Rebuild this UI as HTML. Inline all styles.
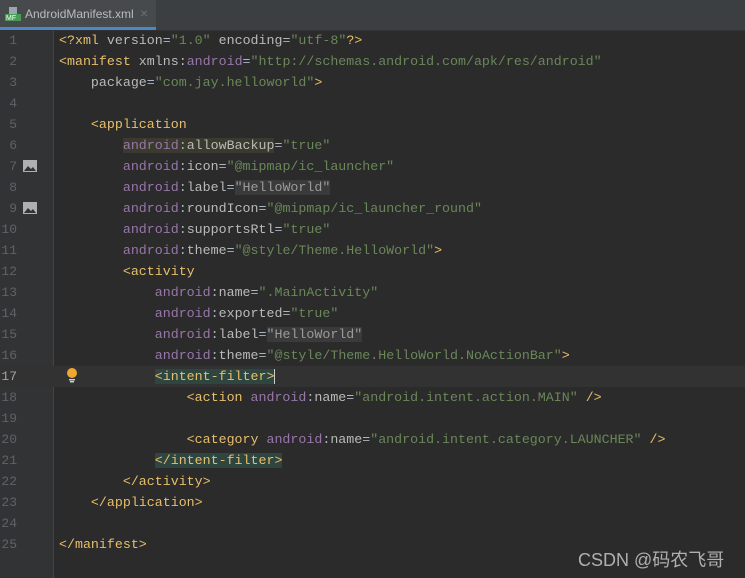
<!DOCTYPE html><html><head><style>
body{margin:0;width:745px;height:578px;background:#2b2b2b;overflow:hidden;position:relative;font-family:"Liberation Mono","DejaVu Sans Mono",monospace}
.tabbar{position:absolute;left:0;top:0;width:745px;height:30px;background:#3c3f41;border-bottom:1px solid #323232}
.tab{position:absolute;left:0;top:0;width:156px;height:27px;background:#474a4c;border-bottom:3px solid #4a88c7}
.tab span{position:absolute;left:25px;top:7px;font:12px "Liberation Sans",sans-serif;color:#bbbbbb}
.gut{position:absolute;left:0;top:31px;width:53px;height:547px;background:#313335;border-right:1px solid #444}
.l{position:absolute;left:0;height:21px;line-height:21px;font-size:13.3px;white-space:pre;width:745px}
.n{position:absolute;left:0;width:17px;text-align:right;color:#606366;font-size:13px}
.c{position:absolute;left:59px;color:#a9b7c6}
.t{color:#e8bf6a}.a{color:#9876aa}.v{color:#6a8759}.p{color:#bababa}
.hl{background:#2f4640}
</style></head><body>
<div class="tabbar"><div class="tab"><svg style="position:absolute;left:5px;top:7px" width="16" height="14"><rect x="4" y="0" width="8" height="7" fill="#9aa7b0"/><rect x="0" y="7" width="16" height="7" fill="#499c54"/><text x="1" y="13" font-size="7" fill="#fff" font-family="Liberation Sans">MF</text></svg><span>AndroidManifest.xml</span><span style="left:140px;top:5px;font-size:14px;color:#6e6e6e">×</span></div></div>
<div class="gut"></div>
<div class="l" style="top:366px;background:#323232"></div>
<div class="l" style="top:30px"><span class="n">1</span><span class="c"><span class="t">&lt;?xml </span><span class="p">version</span>=<span class="v">"1.0"</span> <span class="p">encoding</span>=<span class="v">"utf-8"</span><span class="t">?&gt;</span></span></div>
<div class="l" style="top:51px"><span class="n">2</span><span class="c"><span class="t">&lt;manifest </span><span class="p">xmlns:</span><span class="a">android</span>=<span class="v">"http://schemas.android.com/apk/res/android"</span></span></div>
<div class="l" style="top:72px"><span class="n">3</span><span class="c">    <span class="p">package</span>=<span class="v">"com.jay.helloworld"</span><span class="t">&gt;</span></span></div>
<div class="l" style="top:93px"><span class="n">4</span></div>
<div class="l" style="top:114px"><span class="n">5</span><span class="c">    <span class="t">&lt;application</span></span></div>
<div class="l" style="top:135px"><span class="n">6</span><span class="c">        <span style="background:#3b3a2e"><span class="a">android</span>:<span class="p">allowBackup</span></span>=<span class="v">"true"</span></span></div>
<div class="l" style="top:156px"><span class="n">7</span><span class="c">        <span class="a">android</span>:<span class="p">icon</span>=<span class="v">"@mipmap/ic_launcher"</span></span></div>
<div class="l" style="top:177px"><span class="n">8</span><span class="c">        <span class="a">android</span>:<span class="p">label</span>=<span class="v" style="background:#3a3a3a;color:#9a9a9a">"HelloWorld"</span></span></div>
<div class="l" style="top:198px"><span class="n">9</span><span class="c">        <span class="a">android</span>:<span class="p">roundIcon</span>=<span class="v">"@mipmap/ic_launcher_round"</span></span></div>
<div class="l" style="top:219px"><span class="n">10</span><span class="c">        <span class="a">android</span>:<span class="p">supportsRtl</span>=<span class="v">"true"</span></span></div>
<div class="l" style="top:240px"><span class="n">11</span><span class="c">        <span class="a">android</span>:<span class="p">theme</span>=<span class="v">"@style/Theme.HelloWorld"</span><span class="t">&gt;</span></span></div>
<div class="l" style="top:261px"><span class="n">12</span><span class="c">        <span class="t">&lt;activity</span></span></div>
<div class="l" style="top:282px"><span class="n">13</span><span class="c">            <span class="a">android</span>:<span class="p">name</span>=<span class="v">".MainActivity"</span></span></div>
<div class="l" style="top:303px"><span class="n">14</span><span class="c">            <span class="a">android</span>:<span class="p">exported</span>=<span class="v">"true"</span></span></div>
<div class="l" style="top:324px"><span class="n">15</span><span class="c">            <span class="a">android</span>:<span class="p">label</span>=<span class="v" style="background:#3a3a3a;color:#9a9a9a">"HelloWorld"</span></span></div>
<div class="l" style="top:345px"><span class="n">16</span><span class="c">            <span class="a">android</span>:<span class="p">theme</span>=<span class="v">"@style/Theme.HelloWorld.NoActionBar"</span><span class="t">&gt;</span></span></div>
<div class="l" style="top:366px"><span class="n" style="color:#a4a3a3">17</span><span class="c">            <span class="t hl">&lt;intent-filter&gt;</span><span style="border-left:1px solid #ccc"></span></span></div>
<div class="l" style="top:387px"><span class="n">18</span><span class="c">                <span class="t">&lt;action </span><span class="a">android</span>:<span class="p">name</span>=<span class="v">"android.intent.action.MAIN"</span> <span class="t">/&gt;</span></span></div>
<div class="l" style="top:408px"><span class="n">19</span></div>
<div class="l" style="top:429px"><span class="n">20</span><span class="c">                <span class="t">&lt;category </span><span class="a">android</span>:<span class="p">name</span>=<span class="v">"android.intent.category.LAUNCHER"</span> <span class="t">/&gt;</span></span></div>
<div class="l" style="top:450px"><span class="n">21</span><span class="c">            <span class="t hl">&lt;/intent-filter&gt;</span></span></div>
<div class="l" style="top:471px"><span class="n">22</span><span class="c">        <span class="t">&lt;/activity&gt;</span></span></div>
<div class="l" style="top:492px"><span class="n">23</span><span class="c">    <span class="t">&lt;/application&gt;</span></span></div>
<div class="l" style="top:513px"><span class="n">24</span></div>
<div class="l" style="top:534px"><span class="n">25</span><span class="c"><span class="t">&lt;/manifest&gt;</span></span></div>
<svg style="position:absolute;left:23px;top:160px" width="14" height="12"><rect width="14" height="12" fill="#b0b0b0"/><path d="M1 11 L5 6 L8 9 L10 7 L13 11Z" fill="#313335"/></svg>
<svg style="position:absolute;left:23px;top:202px" width="14" height="12"><rect width="14" height="12" fill="#b0b0b0"/><path d="M1 11 L5 6 L8 9 L10 7 L13 11Z" fill="#313335"/></svg>
<svg style="position:absolute;left:66px;top:367px" width="12" height="16"><circle cx="6" cy="6" r="5" fill="#f0a732"/><rect x="3" y="12" width="6" height="1.5" fill="#ccc"/><rect x="4" y="14" width="4" height="1.5" fill="#ccc"/></svg>
<div style="position:absolute;left:578px;top:546px;font:18px 'Liberation Sans','Noto Sans CJK SC',sans-serif;color:#b0b0b0">CSDN @码农飞哥</div>
</body></html>
